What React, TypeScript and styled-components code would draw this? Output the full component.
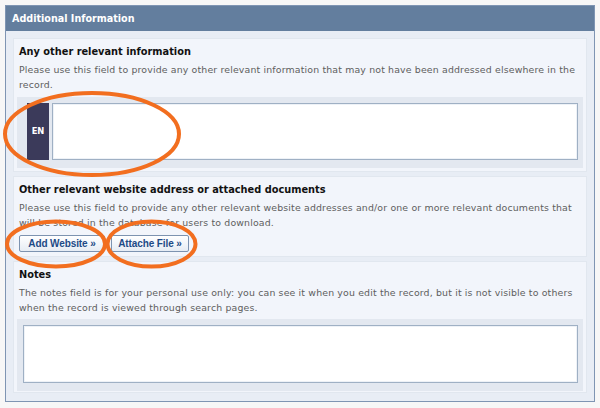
import React from "react";
import styled, { createGlobalStyle } from "styled-components";

const Global = createGlobalStyle`
  html, body { margin: 0; padding: 0; background: #f7f7f7; }
  body { font-family: "DejaVu Sans", Verdana, sans-serif; }
`;

const Page = styled.div`
  position: relative;
  width: 600px;
  height: 408px;
  padding: 5px;
  box-sizing: border-box;
`;

const Panel = styled.div`
  width: 590px;
  height: 397px;
  box-sizing: border-box;
  border: 1px solid #7f95b3;
  background: #e8edf5;
  display: flex;
  flex-direction: column;
`;

const Header = styled.div`
  height: 25px;
  background: #637e9e;
  color: #fff;
  font-weight: bold;
  font-size: 9.6px;
  display: flex;
  align-items: center;
  padding-left: 6px;
`;

const Body = styled.div`
  flex: 1;
  padding: 7px 7px 6px 7px;
  display: flex;
  flex-direction: column;
  gap: 4px;
`;

const Section = styled.div<{ $h: number }>`
  height: ${(p) => p.$h}px;
  box-sizing: border-box;
  background: #f2f5fb;
  border: 1px solid #e1e7ef;
  padding: 6px 5px 0 5px;
  display: flex;
  flex-direction: column;
`;

const Title = styled.div`
  font-size: 9.8px;
  font-weight: bold;
  color: #111;
  line-height: 14px;
  margin-bottom: 4px;
`;

const Desc = styled.div<{ $mb: number }>`
  font-size: 9.4px;
  color: #5e5e5e;
  line-height: 14.8px;
  letter-spacing: 0.15px;
  margin-bottom: ${(p) => p.$mb}px;
`;

const FieldWrap = styled.div<{ $pl: number }>`
  margin-left: -2px;
  margin-right: -2px;
  background: #e3e8f0;
  padding: 6px 5px 8px ${(p) => p.$pl}px;
  display: flex;
  gap: 3px;
`;

const LangTag = styled.div`
  width: 22px;
  height: 57px;
  background: #3b3a5a;
  color: #fff;
  font-size: 8.4px;
  font-weight: bold;
  display: flex;
  align-items: center;
  justify-content: center;
`;

const Input = styled.div<{ $h: number }>`
  flex: 1;
  height: ${(p) => p.$h}px;
  box-sizing: border-box;
  background: #fff;
  border: 1px solid #9fb0c4;
  box-shadow: inset 0 0 0 1px #eef2f7;
`;

const Buttons = styled.div`
  display: flex;
  gap: 6px;
`;

const Button = styled.button<{ $w: number }>`
  width: ${(p) => p.$w}px;
  height: 17px;
  padding: 0;
  border: 1px solid #7d93b0;
  border-radius: 2px;
  background: linear-gradient(#ffffff, #e6ecf4);
  color: #1d4a86;
  font-family: "Liberation Sans", Arial, sans-serif;
  font-weight: bold;
  font-size: 10px;
  letter-spacing: -0.1px;
  display: flex;
  align-items: center;
  justify-content: center;
`;

const Overlay = styled.svg`
  position: absolute;
  left: 0;
  top: 0;
  pointer-events: none;
`;

export default function App() {
  return (
    <Page>
      <Global />
      <Panel>
        <Header>Additional Information</Header>
        <Body>
          <Section $h={134}>
            <Title>Any other relevant information</Title>
            <Desc $mb={4}>
              Please use this field to provide any other relevant information that may not have been addressed elsewhere in the record.
            </Desc>
            <FieldWrap $pl={10}>
              <LangTag>EN</LangTag>
              <Input $h={57} />
            </FieldWrap>
          </Section>
          <Section $h={81}>
            <Title>Other relevant website address or attached documents</Title>
            <Desc $mb={4}>
              Please use this field to provide any other relevant website addresses and/or one or more relevant documents that will be stored in the database for users to download.
            </Desc>
            <Buttons>
              <Button $w={86}>Add Website »</Button>
              <Button $w={78}>Attache File »</Button>
            </Buttons>
          </Section>
          <Section $h={132}>
            <Title>Notes</Title>
            <Desc $mb={3}>
              The notes field is for your personal use only: you can see it when you edit the record, but it is not visible to others when the record is viewed through search pages.
            </Desc>
            <FieldWrap $pl={6}>
              <Input $h={58} />
            </FieldWrap>
          </Section>
        </Body>
      </Panel>
      <Overlay width={600} height={408} viewBox="0 0 600 408">
        <g fill="none" stroke="#f26e1f" strokeWidth={4}>
          <ellipse cx={92} cy={134} rx={87} ry={41} />
          <ellipse cx={56} cy={244} rx={49} ry={22.5} />
          <ellipse cx={151.5} cy={244} rx={44} ry={22.5} />
        </g>
      </Overlay>
    </Page>
  );
}
